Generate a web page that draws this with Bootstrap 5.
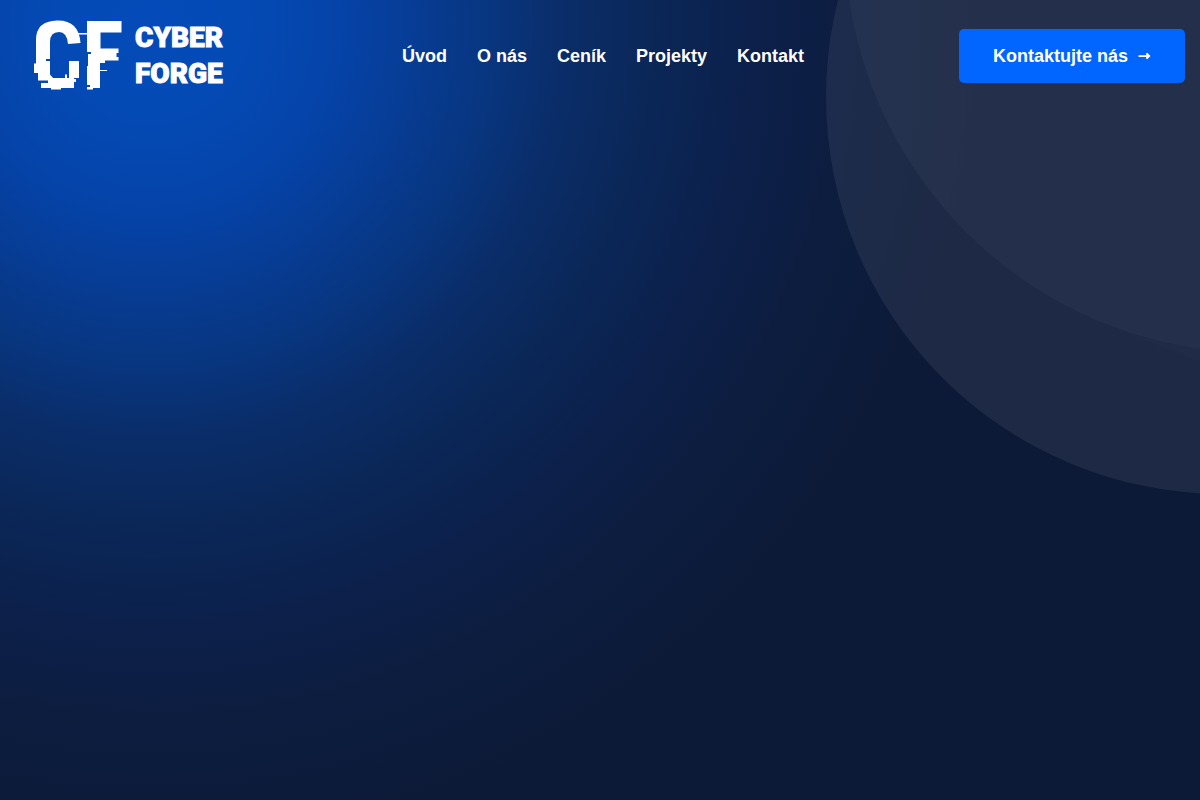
<!DOCTYPE html>
<html lang="cs">
<head>
<meta charset="utf-8">
<meta name="viewport" content="width=device-width, initial-scale=1">
<title>Cyber Forge</title>
<link href="https://cdn.jsdelivr.net/npm/bootstrap@5.3.0/dist/css/bootstrap.min.css" rel="stylesheet">
<style>
body{font-family:"Liberation Sans",Arial,sans-serif;background:#0c1a37;color:#fff}
.hero{background:radial-gradient(circle at 150px 24px,#044bb9 0,#044ab5 90px,#0543a8 190px,#073c93 270px,#08347b 356px,#0a2e6b 406px,#0a2758 499px,#0c204b 600px,#0c1d3f 700px,#0c1a37 830px)}
.rings{position:absolute;top:0;right:0;width:374px;height:494px;z-index:0}
.site-nav{z-index:1;min-height:112px;padding:0 15px}
.side{flex:1 1 0}
.logo{margin-left:17px;gap:13px;color:#fff;text-decoration:none}
.wordmark{font-family:Roboto,"Liberation Sans",sans-serif;font-weight:900;font-size:28px;line-height:36px;-webkit-text-stroke:1px #fff}
.site-nav .menu{gap:30px;padding-left:6px}
.site-nav .menu .nav-link{padding:8px 0;font-size:18px;line-height:28px;font-weight:700;color:#fff}
.cta{background:#06f;color:#fff;font-size:18px;line-height:28px;font-weight:700;padding:13px 34px;border:0;border-radius:5px}
.cta:hover{background:#0052cc;color:#fff}
</style>
</head>
<body>
<div class="hero min-vh-100 position-relative overflow-hidden">
<svg class="rings" viewBox="826 0 374 494" aria-hidden="true">
<circle cx="1223" cy="97" r="397" fill="#fff6fa" fill-opacity=".07"/>
<circle cx="1258" cy="-60" r="413" fill="#fff" fill-opacity=".035"/>
<path d="M1125 332Q1165 349 1200 361V349Q1160 344 1125 332Z" fill="#fff" fill-opacity=".016"/>
</svg>
<header class="site-nav navbar navbar-expand position-relative d-flex align-items-center">
<div class="side d-flex">
<a class="logo d-inline-flex align-items-center" href="#">
<svg width="90" height="74" viewBox="32 19 90 74" fill="#fff" role="img" aria-label="CF">
<path d="M36 74V40Q36 21 57 20.500Q79 20 80.500 43L68 44Q67 32 59 32Q50 32 50 42V59H46V61H50V78H69V61H79V78H74V88H61V89.500H51V88H41V83H48V80.500H38V73H34V63.500H36Z"/>
<path d="M73 33H87V21H121.500V32.500H100.500V48.500H118.500V53H116.500V57H118.500V60.500H105V63H100V70H107V71H100V88H93V89.500H87V87H90V85H87V66H88V54H91V52H87V34.500H73Z"/>
<path d="M50 74.500l3 3.500h-3zM65 74.500h2v3.500h-2zM73 79h3v3h-3z"/>
</svg>
<span class="wordmark">CYBER<br>FORGE</span>
</a>
</div>
<nav aria-label="Hlavní">
<ul class="navbar-nav menu">
<li class="nav-item"><a class="nav-link" href="#">Úvod</a></li>
<li class="nav-item"><a class="nav-link" href="#">O nás</a></li>
<li class="nav-item"><a class="nav-link" href="#">Ceník</a></li>
<li class="nav-item"><a class="nav-link" href="#">Projekty</a></li>
<li class="nav-item"><a class="nav-link" href="#">Kontakt</a></li>
</ul>
</nav>
<div class="side d-flex justify-content-end">
<button type="button" class="btn cta d-inline-flex align-items-center">Kontaktujte nás
<svg class="ms-2" width="15" height="12" viewBox="0 0 15 12" aria-hidden="true"><path d="M2.500 5.200H10.200V3H11.500L14.500 6L11.500 9H10.200V6.900H2.500Z" fill="#fff"/></svg>
</button>
</div>
</header>
</div>
<script src="https://cdn.jsdelivr.net/npm/bootstrap@5.3.0/dist/js/bootstrap.bundle.min.js"></script>
</body>
</html>
